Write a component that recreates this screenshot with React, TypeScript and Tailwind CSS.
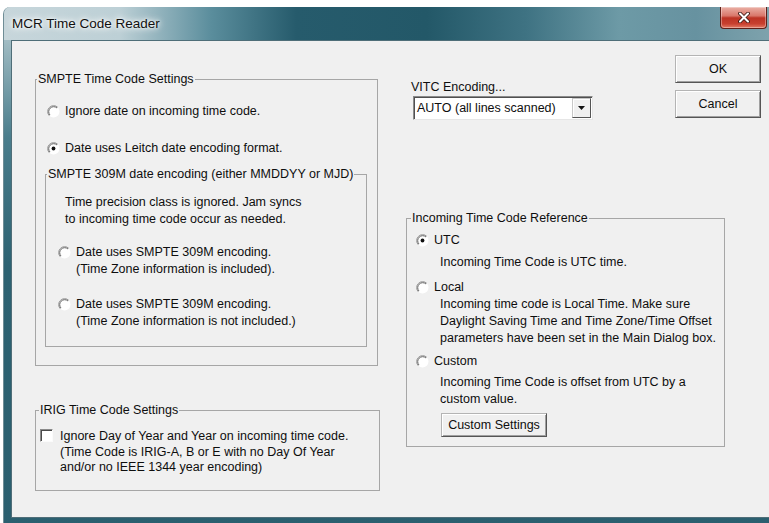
import type { ReactNode } from 'react';

const Radio = ({ checked = false }: { checked?: boolean }) => (
  <svg width="13" height="13" viewBox="0 0 13 13" className="shrink-0 mt-[2px]">
    <circle cx="6.5" cy="6.5" r="6" fill="#fff" />
    <path d="M2.26 10.74A6 6 0 0 1 10.74 2.26" fill="none" stroke="#949494" strokeWidth="1" />
    <path d="M2.97 10.03A5 5 0 0 1 10.03 2.97" fill="none" stroke="#555" strokeWidth="0.9" />
    {checked && <circle cx="6.5" cy="6.5" r="1.9" fill="#111" />}
  </svg>
);

const Checkbox = () => (
  <div className="shrink-0 w-[13px] h-[13px] bg-white border border-t-[#8a8a8a] border-l-[#8a8a8a] border-r-[#fbfbfb] border-b-[#fbfbfb] shadow-[inset_1px_1px_0_#4a4a4a]" />
);

const Group = ({
  label,
  className,
  legendClass,
  children,
}: {
  label: string;
  className: string;
  legendClass: string;
  children: ReactNode;
}) => (
  <fieldset className={`border border-[#a6a6a6] ${className}`}>
    <legend className={`px-[1px] whitespace-nowrap ${legendClass}`}>{label}</legend>
    {children}
  </fieldset>
);

const Button = ({ label, className }: { label: string; className: string }) => (
  <button
    className={`flex items-center justify-center bg-[#f0f0f0] border border-[#b4b4b4] border-r-[#555] border-b-[#555] shadow-[inset_1px_1px_0_#fff,inset_-1px_-1px_0_#a0a0a0] ${className}`}>
    {label}
  </button>
);

const Option = ({
  checked,
  lines,
  gap,
  className,
}: {
  checked?: boolean;
  lines: string[];
  gap: string;
  className: string;
}) => (
  <div className={`flex items-start ${gap} ${className}`}>
    <Radio checked={checked} />
    <div className="whitespace-nowrap">
      {lines.map((l) => (
        <div key={l}>{l}</div>
      ))}
    </div>
  </div>
);

const TitleBar = () => (
  <div className="h-[33px] flex items-start rounded-tl-[7px] bg-[linear-gradient(90deg,#c7d6db_0%,#bdd0d6_15%,#5a8d9c_27%,#265b6c_38%,#235868_55%,#3f7383_68%,#6d9aa6_80%,#6792a0_90%,#7fa3ad_100%)]">
    <div className="pl-[8px] pt-[8px] text-[13.5px] text-[#101010] [text-shadow:0_0_6px_#fff,0_0_10px_#fff,0_0_3px_#fff]">
      MCR Time Code Reader
    </div>
    <div className="ml-auto mr-[6px] w-[47px] h-[22px] flex items-center justify-center rounded-b-[4px] border border-t-0 border-[#5e2019] bg-[linear-gradient(180deg,#eab0a6_0%,#d9776a_42%,#bc3324_52%,#c8402f_80%,#e27a64_100%)] shadow-[inset_0_0_0_1px_rgba(255,255,255,0.35)]">
      <svg width="12" height="11" viewBox="0 0 12 11">
        <path d="M2 1.5L10 9.5M10 1.5L2 9.5" stroke="#3a1814" strokeWidth="3.8" strokeLinecap="round" />
        <path d="M2 1.5L10 9.5M10 1.5L2 9.5" stroke="#fff" strokeWidth="2.1" strokeLinecap="round" />
      </svg>
    </div>
  </div>
);

const SmpteSettings = () => (
  <Group label="SMPTE Time Code Settings" className="mt-[30px] w-[343px] pb-[18px]" legendClass="ml-[1px]">
    <Option lines={['Ignore date on incoming time code.']} gap="gap-[5px]" className="mt-[15px] ml-[11px]" />
    <Option checked lines={['Date uses Leitch date encoding format.']} gap="gap-[5px]" className="mt-[20px] ml-[11px]" />
    <Group
      label="SMPTE 309M date encoding (either MMDDYY or MJD)"
      className="mt-[9px] ml-[9px] w-[322px] pb-[16px]"
      legendClass="ml-[1px]">
      <div className="mt-[11px] ml-[19px] whitespace-nowrap">
        <div>Time precision class is ignored. Jam syncs</div>
        <div>to incoming time code occur as needed.</div>
      </div>
      <Option
        lines={['Date uses SMPTE 309M encoding.', '(Time Zone information is included).']}
        gap="gap-[5px]"
        className="mt-[16px] ml-[12px]"
      />
      <Option
        lines={['Date uses SMPTE 309M encoding.', '(Time Zone information is not included.)']}
        gap="gap-[5px]"
        className="mt-[18px] ml-[12px]"
      />
    </Group>
  </Group>
);

const IrigSettings = () => (
  <Group label="IRIG Time Code Settings" className="mt-[36px] w-[345px] pb-[14px]" legendClass="ml-[3px]">
    <div className="mt-[10px] ml-[4px] flex items-start gap-[7px] leading-[15.5px]">
      <Checkbox />
      <div className="whitespace-nowrap">
        <div>Ignore Day of Year and Year on incoming time code.</div>
        <div>(Time Code is IRIG-A, B or E with no Day Of Year</div>
        <div>and/or no IEEE 1344 year encoding)</div>
      </div>
    </div>
  </Group>
);

const VitcEncoding = () => (
  <div className="ml-[5px] mt-[38px]">
    <div>VITC Encoding...</div>
    <div className="ml-[2px] w-[180px] h-[24px] flex items-center bg-white border border-t-[#8a8a8a] border-l-[#8a8a8a] border-r-[#e6e6e6] border-b-[#e6e6e6] shadow-[inset_1px_1px_0_#505050]">
      <span className="pl-[3px] whitespace-nowrap">AUTO (all lines scanned)</span>
      <div className="ml-auto mr-[1px] w-[19px] h-[20px] flex items-center justify-center bg-[#f0f0f0] border border-[#c8c8c8] border-r-[#555] border-b-[#555] shadow-[inset_1px_1px_0_#fff]">
        <svg width="7" height="4" viewBox="0 0 7 4">
          <path d="M0 0H7L3.5 4Z" fill="#111" />
        </svg>
      </div>
    </div>
  </div>
);

const IncomingReference = () => (
  <Group label="Incoming Time Code Reference" className="mt-[90px] w-[319px] pb-[9px]" legendClass="ml-[4px]">
    <Option checked lines={['UTC']} gap="gap-[5px]" className="mt-[5px] ml-[9px]" />
    <div className="mt-[5px] ml-[33px] whitespace-nowrap">Incoming Time Code is UTC time.</div>
    <Option lines={['Local']} gap="gap-[5px]" className="mt-[8px] ml-[9px]" />
    <div className="ml-[33px] whitespace-nowrap">
      <div>Incoming time code is Local Time. Make sure</div>
      <div>Daylight Saving Time and Time Zone/Time Offset</div>
      <div>parameters have been set in the Main Dialog box.</div>
    </div>
    <Option lines={['Custom']} gap="gap-[5px]" className="mt-[6px] ml-[9px]" />
    <div className="mt-[4px] ml-[33px] whitespace-nowrap">
      <div>Incoming Time Code is offset from UTC by a</div>
      <div>custom value.</div>
    </div>
    <Button label="Custom Settings" className="mt-[5px] ml-[34px] w-[106px] h-[24px]" />
  </Group>
);

export default function App() {
  return (
    <div className="w-[769px] h-[523px] overflow-hidden bg-white font-['Liberation_Sans',Arial,sans-serif] text-[12.5px] leading-[17px] text-[#0e0e0e]">
      <div className="ml-[3px] mt-[7px] w-[770px] h-[530px] flex flex-col rounded-tl-[7px] border-l border-[#6f8d96] bg-[linear-gradient(180deg,#c4d5da_0px,#9ab7bf_40px,#4a7d8c_130px,#2d6272_260px,#2b5f6f_100%)]">
        <TitleBar />
        <div className="ml-[7px] h-[478px] flex items-start bg-[#f0f0f0] border border-[#4f6e78]">
          <div className="ml-[23px] w-[345px] flex flex-col">
            <SmpteSettings />
            <IrigSettings />
          </div>
          <div className="ml-[26px] flex-1 flex flex-col pr-[11px]">
            <div className="flex items-start">
              <VitcEncoding />
              <div className="ml-auto mt-[14px] flex flex-col gap-[7px]">
                <Button label="OK" className="w-[86px] h-[28px]" />
                <Button label="Cancel" className="w-[86px] h-[28px]" />
              </div>
            </div>
            <IncomingReference />
          </div>
        </div>
      </div>
    </div>
  );
}
